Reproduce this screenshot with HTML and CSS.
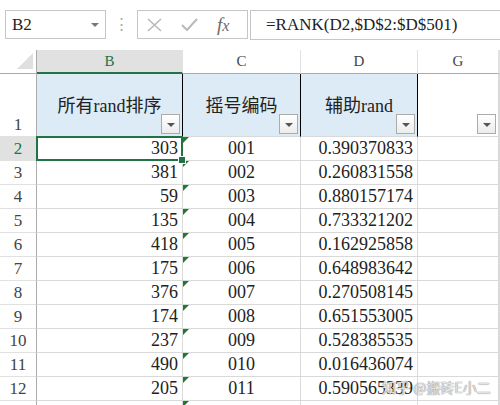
FILE: index.html
```html
<!DOCTYPE html>
<html lang="zh">
<head>
    <meta charset="UTF-8">
    <title>RANK</title>
    <link rel="stylesheet" href="styles.css">
</head>
<body>
    <div class="formula-bar">
        <div class="name-box"><span>B2</span><span class="drop"></span></div>
        <div class="dots">⋮</div>
        <div class="fx-group">
            <svg width="15" height="14" viewBox="0 0 15 14"><path d="M1 1 L14 13 M14 1 L1 13" stroke="#b9b9b9" stroke-width="1.6" fill="none"/></svg>
            <svg width="17" height="13" viewBox="0 0 17 13"><path d="M1 7 L6 12 L16 1" stroke="#b9b9b9" stroke-width="2" fill="none"/></svg>
            <span class="fx">f<i>x</i></span>
        </div>
        <div class="formula">=RANK(D2,$D$2:$D$501)</div>
    </div>

    <div class="sheet">
        <!-- column headers -->
        <div class="cell corner"></div>
        <div class="cell col-head selected">B</div>
        <div class="cell col-head">C</div>
        <div class="cell col-head">D</div>
        <div class="cell col-head">G</div>
        <div class="cell col-head"></div>

        <!-- row 1 -->
        <div class="cell row-head tall">1</div>
        <div class="cell title">所有rand排序<span class="filter"></span></div>
        <div class="cell title">摇号编码<span class="filter"></span></div>
        <div class="cell title">辅助rand<span class="filter"></span></div>
        <div class="cell blank-title"><span class="filter"></span></div>
        <div class="cell"></div>

        <div class="cell row-head selected">2</div>
        <div class="cell num active">303<span class="handle"></span></div>
        <div class="cell code">001</div>
        <div class="cell num">0.390370833</div>
        <div class="cell"></div>
        <div class="cell"></div>

        <div class="cell row-head">3</div>
        <div class="cell num">381</div>
        <div class="cell code">002</div>
        <div class="cell num">0.260831558</div>
        <div class="cell"></div>
        <div class="cell"></div>

        <div class="cell row-head">4</div>
        <div class="cell num">59</div>
        <div class="cell code">003</div>
        <div class="cell num">0.880157174</div>
        <div class="cell"></div>
        <div class="cell"></div>

        <div class="cell row-head">5</div>
        <div class="cell num">135</div>
        <div class="cell code">004</div>
        <div class="cell num">0.733321202</div>
        <div class="cell"></div>
        <div class="cell"></div>

        <div class="cell row-head">6</div>
        <div class="cell num">418</div>
        <div class="cell code">005</div>
        <div class="cell num">0.162925858</div>
        <div class="cell"></div>
        <div class="cell"></div>

        <div class="cell row-head">7</div>
        <div class="cell num">175</div>
        <div class="cell code">006</div>
        <div class="cell num">0.648983642</div>
        <div class="cell"></div>
        <div class="cell"></div>

        <div class="cell row-head">8</div>
        <div class="cell num">376</div>
        <div class="cell code">007</div>
        <div class="cell num">0.270508145</div>
        <div class="cell"></div>
        <div class="cell"></div>

        <div class="cell row-head">9</div>
        <div class="cell num">174</div>
        <div class="cell code">008</div>
        <div class="cell num">0.651553005</div>
        <div class="cell"></div>
        <div class="cell"></div>

        <div class="cell row-head">10</div>
        <div class="cell num">237</div>
        <div class="cell code">009</div>
        <div class="cell num">0.528385535</div>
        <div class="cell"></div>
        <div class="cell"></div>

        <div class="cell row-head">11</div>
        <div class="cell num">490</div>
        <div class="cell code">010</div>
        <div class="cell num">0.016436074</div>
        <div class="cell"></div>
        <div class="cell"></div>

        <div class="cell row-head">12</div>
        <div class="cell num">205</div>
        <div class="cell code">011</div>
        <div class="cell num">0.590565339</div>
        <div class="cell"></div>
        <div class="cell"></div>

        <!-- row 13, only its top edge is in view -->
        <div class="cell row-head"></div>
        <div class="cell"></div>
        <div class="cell code"></div>
        <div class="cell"></div>
        <div class="cell"></div>
        <div class="cell"></div>
    </div>

    <div class="watermark">知乎 @搬砖E小二</div>
</body>
</html>
```

FILE: styles.css
```css
body {
    margin: 0;
    background: #fff;
    font-family: "Liberation Serif", "Noto Sans CJK SC", serif;
    color: #222;
    overflow: hidden;
    height: 405px;
    position: relative;
}

/* formula bar */
.formula-bar {
    display: flex;
    align-items: flex-start;
    height: 50px;
    padding: 10px 0 0 5px;
    box-sizing: border-box;
}

.name-box {
    width: 101px;
    height: 29px;
    border: 1px solid #c6c6c6;
    box-sizing: border-box;
    display: flex;
    align-items: center;
    justify-content: space-between;
    padding: 0 6px;
    font-size: 17px;
}

.drop {
    border-left: 4px solid transparent;
    border-right: 4px solid transparent;
    border-top: 4px solid #777;
}

.dots {
    width: 31px;
    text-align: center;
    color: #a8a8a8;
    font-size: 15px;
    line-height: 29px;
}

.fx-group {
    width: 111px;
    height: 29px;
    border: 1px solid #c6c6c6;
    box-sizing: border-box;
    display: flex;
    align-items: center;
    padding-left: 9px;
    gap: 19px;
}

.fx {
    font-style: italic;
    font-size: 19px;
    color: #6a6a6a;
    font-family: "Liberation Serif", serif;
}

.fx i {
    font-size: 16px;
}

.formula {
    flex: 1;
    margin-left: 2px;
    height: 30px;
    border: 1px solid #c6c6c6;
    border-right: none;
    box-sizing: border-box;
    padding-left: 15px;
    font-size: 17px;
    line-height: 28px;
}

/* sheet grid */
.sheet {
    display: grid;
    grid-template-columns: 37px 146px 118px 117px 81px 1fr;
    grid-template-rows: 24px 63px repeat(12, 24px);
}

.cell {
    box-sizing: border-box;
    border-right: 1px solid #d9d9d9;
    border-bottom: 1px solid #d9d9d9;
    font-size: 18px;
    display: flex;
    align-items: center;
    position: relative;
    white-space: nowrap;
}

.corner {
    border-bottom-color: #ababab;
    border-right-color: #ababab;
}

.corner::after {
    content: '';
    position: absolute;
    right: 3px;
    bottom: 4px;
    border-left: 16px solid transparent;
    border-bottom: 16px solid #dfdfdf;
}

.col-head {
    justify-content: center;
    font-size: 15px;
    color: #444;
    border-right-color: #e1e1e1;
    border-bottom-color: #ababab;
}

.col-head.selected {
    background: #e1e1e1;
    color: #217346;
    border-bottom: 2px solid #217346;
}

.row-head {
    justify-content: center;
    font-size: 17px;
    color: #444;
    border-right-color: #ababab;
    border-bottom-color: #e1e1e1;
}

.row-head.tall {
    align-items: flex-end;
    padding-bottom: 1px;
}

.row-head.selected {
    background: #e1e1e1;
    color: #217346;
}

.title {
    background: #ddebf7;
    justify-content: center;
    border-right-color: #000;
    padding-bottom: 2px;
}

.blank-title {
    background: #fff;
}

.filter {
    position: absolute;
    right: 2px;
    bottom: 2px;
    width: 19px;
    height: 20px;
    box-sizing: border-box;
    border: 1px solid #ababab;
    background: linear-gradient(#fff, #ececec);
}

.filter::after {
    content: '';
    position: absolute;
    left: 5px;
    top: 8px;
    border-left: 4px solid transparent;
    border-right: 4px solid transparent;
    border-top: 4px solid #555;
}

.num {
    justify-content: flex-end;
    padding-right: 4px;
}

.code {
    justify-content: center;
}

.code::before {
    content: '';
    position: absolute;
    left: 0;
    top: 0;
    border-top: 6px solid #1e7b30;
    border-right: 6px solid transparent;
}

.active::after {
    content: '';
    position: absolute;
    left: -1px;
    top: -1px;
    right: -1px;
    bottom: -1px;
    border: 2px solid #217346;
}

.handle {
    position: absolute;
    right: -4px;
    bottom: -4px;
    width: 6px;
    height: 6px;
    background: #217346;
    border: 1px solid #fff;
    z-index: 2;
}

.watermark {
    position: absolute;
    left: 382px;
    top: 377px;
    white-space: nowrap;
    font-family: "Noto Sans CJK SC", sans-serif;
    font-size: 14px;
    line-height: 20px;
    color: rgba(255, 255, 255, 0.75);
    text-shadow: 0 0 1px #888, 0 0 1px #888;
}
```
